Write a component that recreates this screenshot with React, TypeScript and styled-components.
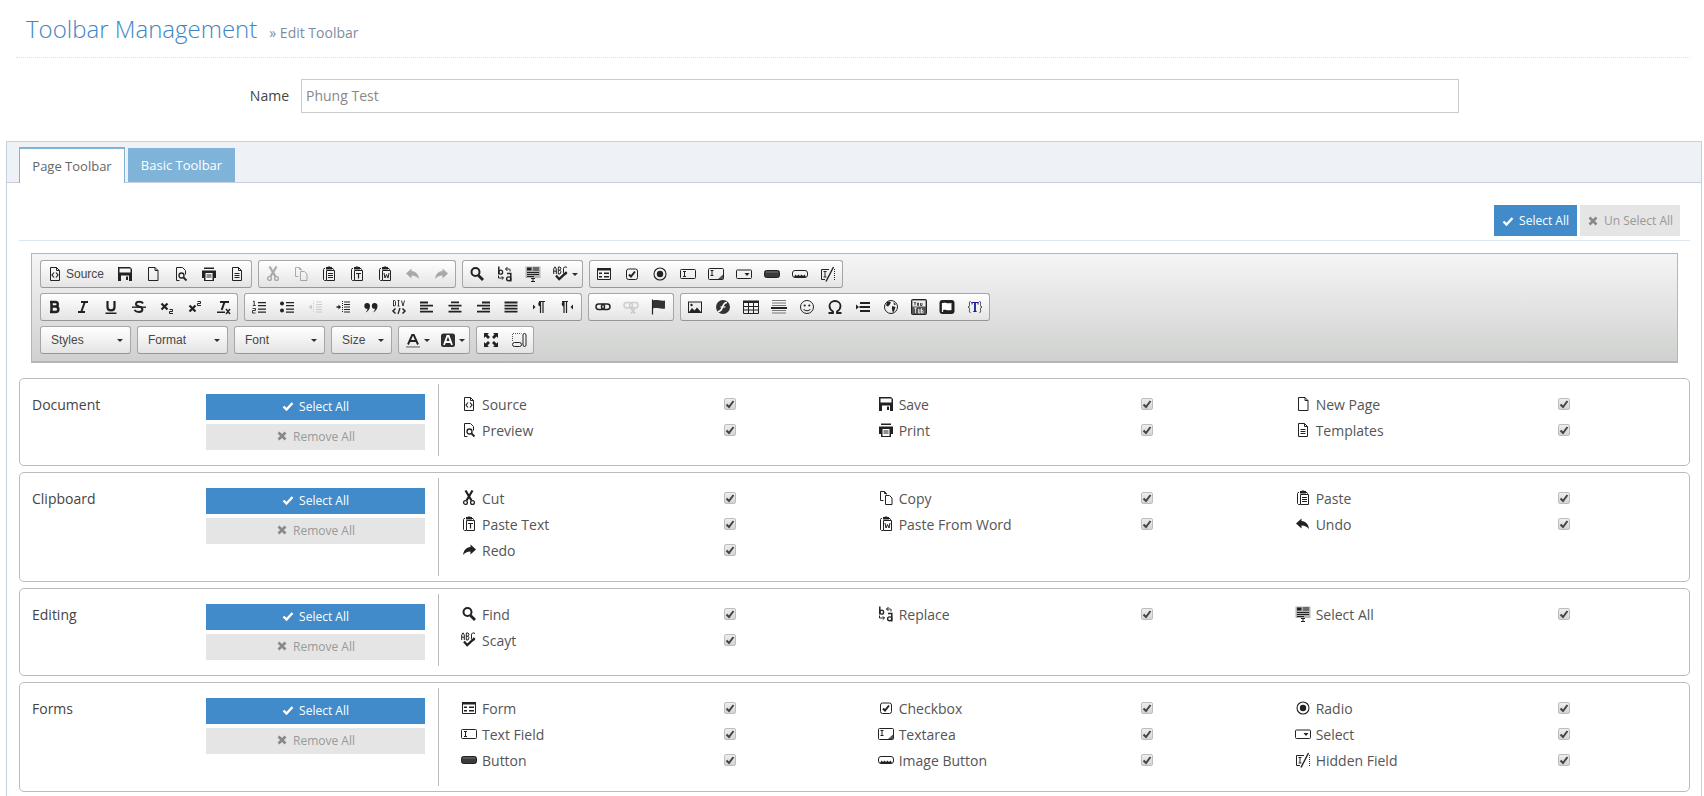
import React from "react";
import styled, { createGlobalStyle } from "styled-components";

const Global = createGlobalStyle`
  html, body { margin: 0; padding: 0; height: 796px; overflow: hidden; background: #fff; }
  body { font-family: "Open Sans", "Liberation Sans", sans-serif; font-size: 14px; color: #555; }
`;

const k = "#222";
const St = (p: { d: string; w?: number; c?: string }) => (
  <path d={p.d} fill="none" stroke={p.c || k} strokeWidth={p.w || 1} />
);
const Fi = (p: { d: string; c?: string }) => <path d={p.d} fill={p.c || k} fillRule="evenodd" />;

const clip = (inner: React.ReactNode) => (
  <>
    <St d="M4 2.500H3L2.500 3.500V13.500L3.500 14.500H5" />
    <St d="M11 2.500h1l.5 1v1" />
    <Fi d="M5 1h1.500l.5-.5h2l.5.5H11v2.500H5z" />
    <St d="M5.500 4.500h8v10h-8z" />
    {inner}
  </>
);
const comma = "M4 4a2.800 2.800 0 0 1 3 3c0 3-2 5.500-4.500 6.500 1.200-1.200 1.800-2.300 2-3.700A2.900 2.900 0 0 1 4 4z";

const ICONS: Record<string, React.ReactNode> = {
  source: <><St d="M3.500 1.500h6l3 3v10h-9z" /><St d="M9.500 1.500v3h3" /><St d="M7 6.500 5 9l2 2.500M9 6.500 11 9 9 11.500" w={1.2} /></>,
  save: <Fi d="M1 1h12l2 2v12H1zM2.500 2.500v4h11v-4zM4 9.500V15h8V9.500zM9 10.500h2V14H9z" />,
  newpage: <><St d="M3.500 1.500h6.500l3 3v10h-9.500z" /><St d="M10 1.500v3h3" /></>,
  preview: <><St d="M3.500 14.500v-13h6l3 3v4" /><St d="M3.500 14.500h3" /><circle cx="8.500" cy="9.500" r="2.500" fill="none" stroke={k} strokeWidth="1.300" /><St d="M10.500 11.500l3 3" w={1.800} /></>,
  print: <><Fi d="M3 1.500h10V3H3z" /><Fi d="M1 4.500h14V12h-2v3H3v-3H1z" /><Fi d="M4.500 7h7v7h-7z" c="#fff" /><Fi d="M5.500 8.500h5v1h-5zM5.500 10.500h5v1h-5z" /></>,
  templates: <><St d="M3.500 1.500h6l3 3v10h-9z" /><St d="M9.500 1.500v3h3" /><St d="M5.500 7.500h5M5.500 9.500h5M5.500 11.500h5" /></>,
  cut: <><St d="M4.500 .5 10.500 10.500M11.500 .5 5.500 10.500" w={2.200} /><circle cx="4.500" cy="12.500" r="1.900" fill="none" stroke={k} strokeWidth="1.300" /><circle cx="11.500" cy="12.500" r="1.900" fill="none" stroke={k} strokeWidth="1.300" /></>,
  copy: <><St d="M5.500 10.500h-3v-9h4l2 2v1" /><St d="M6.500 1.500v2h2" /><St d="M7.500 5.500h4l2.500 2.500v6.500H7.500z" /></>,
  paste: clip(<St d="M7 7.500h5M7 9.500h5M7 11.500h5" />),
  pastetext: clip(<St d="M7 7.500h5M9.500 7.500v5" w={1.200} />),
  pasteword: clip(<St d="M7 7l1 5 1.500-3.500L11 12l1-5" />),
  undo: <Fi d="M6.500 2.500 1 7.500l5.500 5V9.500c3.500 0 5.500 1.300 7.500 3.500-.5-4.500-3-7.500-7.500-8z" />,
  redo: <Fi d="M9.500 2.500 15 7.500l-5.500 5V9.500C6 9.500 4 10.800 2 13c.5-4.500 3-7.500 7.500-8z" />,
  find: <><circle cx="6.500" cy="6" r="4" fill="none" stroke={k} strokeWidth="2" /><St d="M9.500 9.500 14 14" w={2.800} /></>,
  replace: <><St d="M1.800 .5v8" w={1.500} /><ellipse cx="3.700" cy="6.200" rx="1.900" ry="2" fill="none" stroke={k} strokeWidth="1.300" /><St d="M12.500 3H8.500M10.500 1 8.500 3l2 2M13 3v2.500" /><St d="M1.500 9.500v2.500h5M4.800 10.300 6.500 12l-1.700 1.700" /><St d="M10 7.500h3.800v8" w={1.500} /><ellipse cx="11.700" cy="12.800" rx="2.100" ry="1.900" fill="none" stroke={k} strokeWidth="1.400" /></>,
  scayt: <><St d="M.7 8V3L2 .8 3.300 3v5M.7 5.200h2.600" /><St d="M5.300 8V1h1.700l1 1.200-1 2H5.300m1.700 0 1 1.500L7 8H5.300" /><St d="M14 1.500 13 1h-1.500L10.500 2.200v4.600L11.500 8H13l1-.5" /><St d="M3 9.500l3.200 3.700 7.500-7" w={2.300} /></>,
  selectall: <><Fi d="M.5 .5h15V12H.5z" c="#b4b4b4" /><Fi d="M2 1.500h4.500v3H2zM8 1.500h6v1H8zM8 3.500h6v1H8zM2 6h12v1H2zM2 8h12v1H2zM2 10h7v1H2z" /><St d="M6 12.500h4M6 15.500h4M8 12.500v3" /></>,
  form: <><St d="M1.500 2.500h13v11h-13z" /><Fi d="M1 2h14v2.500H1z" /><Fi d="M3 6.500h3v1.500H3zM3 10h3v1.500H3zM8 6.500h5v1.500H8zM8 10h5v1.500H8z" /></>,
  checkbox: <><rect x="2.500" y="3" width="11" height="10.500" rx="2" fill="none" stroke={k} /><St d="M5 8.500l2 2 4-5" w={2} /></>,
  radio: <><circle cx="8" cy="8" r="6" fill="none" stroke={k} strokeWidth="1.100" /><circle cx="8" cy="8" r="3.200" fill={k} /></>,
  textfield: <><rect x=".5" y="3.500" width="15" height="9" rx="1" fill="none" stroke={k} /><St d="M3 5.500h3M3 10.500h3M4.500 5.500v5" /></>,
  textarea: <><rect x=".5" y="2.500" width="15" height="11" rx="1" fill="none" stroke={k} /><St d="M2.500 4.500h3M2.500 9.500h3M4 4.500v5" /><Fi d="M15 8.500V13h-5z" c="#555" /></>,
  select: <><rect x=".5" y="4" width="15" height="8.500" rx="1" fill="none" stroke={k} /><Fi d="M8.500 7h5L11 10z" /></>,
  button: <><rect x=".5" y="4.500" width="15" height="7" rx="2" fill="#3a3a3a" stroke={k} /><Fi d="M2 5.500h12v1H2z" c="#777" /></>,
  imagebutton: <><rect x=".5" y="4.500" width="15" height="7" rx="2.500" fill="none" stroke={k} /><Fi d="M2 11l1.500-2.500L5 10l1.500-1.500L8 10l1.500-1.500L11 10l1.500-1.500L14 11z" /></>,
  hiddenfield: <><St d="M9 3.500H1.500v10H5" /><St d="M3.500 5.500h3M3.500 11h3M5 5.500V11" /><St d="M13.500 1 6 15.500" w={1.400} /><path d="M14.500 3v11" stroke={k} strokeDasharray="1 1" /></>,
  bold: <St d="M4.500 3v10M3 3h5.500c3 0 3 4.500 0 4.500h-3.500m3.500 0c3.800 0 3.800 5.500 0 5.500H3" w={2.500} />,
  italic: <St d="M6 3h7M3 13h7M9.800 3 6.200 13" w={2} />,
  underline: <><St d="M4.500 2v6.300c0 4.200 7 4.200 7 0V2" w={2.200} /><Fi d="M2.500 13.500h11V15h-11z" /></>,
  strike: <><St d="M12 4.500c-1-2.300-7-2.800-7 .5 0 1.300 1 2 3 2.500 5 1 4 5.500 0 5.500-2 0-3.500-.5-4.500-2" w={2} /><Fi d="M1 7.500h14v1.400H1z" /></>,
  sub: <><St d="M2.500 4.500l6 6M8.500 4.500l-6 6" w={2.200} /><St d="M10.500 10.500h3v2h-3v2h3.500" /></>,
  sup: <><St d="M2.500 6.500l6 6M8.500 6.500l-6 6" w={2.200} /><St d="M10.500 2.500h3v2h-3v2h3.500" /></>,
  removeformat: <><St d="M5 3h9M9.500 3 6.700 11" w={2} /><Fi d="M2 12.500h8V14H2z" /><St d="M11 10l4 5M15 10l-4 5" w={1.500} /></>,
  numbered: <><St d="M2 2.500 3.200 2v4.500M1.800 6.500h3M1.500 9.500h3v2h-3v2.500h3" w={.9} /><Fi d="M7 3h8v1.300H7zM7 6h8v1.300H7zM7 9.500h8v1.300H7zM7 12.500h8v1.300H7z" /></>,
  bulleted: <><circle cx="3" cy="4.500" r="2" fill={k} /><circle cx="3" cy="11.500" r="2" fill={k} /><Fi d="M7 3h8v1.300H7zM7 6h8v1.300H7zM7 9.500h8v1.300H7zM7 12.500h8v1.300H7z" /></>,
  outdent: <><Fi d="M5 5.500 1.500 8 5 10.500z" c="#888" /><path d="M6.500 2v12" stroke="#999" strokeDasharray="1 1" /><Fi d="M9 2.500h6v1H9zM9 5h6v1H9zM9 7.500h6v1H9zM9 10h6v1H9zM9 12.500h6v1H9z" c="#888" /></>,
  indent: <><Fi d="M1.500 7.300h2V5.500L6 8 3.500 10.500V8.700h-2z" /><path d="M7.500 2v12" stroke={k} strokeDasharray="1 1" /><Fi d="M9 2.500h6v1H9zM9 5h6v1H9zM9 7.500h6v1H9zM9 10h6v1H9zM9 12.500h6v1H9z" /></>,
  quote: <><Fi d={comma} /><g transform="translate(7.500 0)"><Fi d={comma} /></g></>,
  div: <><St d="M2.500 1.500V7h1.200l.8-1V2.500l-.8-1zM7.500 1.500V7M6.500 1.500h2M6.500 7h2M10.500 1.500l1.500 5.500 1.500-5.500" w={.9} /><St d="M4.500 9.500 2 12l2.500 2.500M11.500 9.500 14 12l-2.500 2.500" w={1.500} /><St d="M9 9l-2 6" w={1.300} /></>,
  left: <Fi d="M1 2.500h8v2H1zM1 5.800h13v1.600H1zM1 8.800h8v1.600H1zM1 11.800h13v1.800H1z" />,
  center: <Fi d="M4 2.500h8v1.700H4zM1.500 5.800h13v1.600h-13zM4 8.800h8v1.600H4zM1.500 11.800h13v1.800h-13z" />,
  right: <Fi d="M7 2.500h8v2H7zM2 5.800h13v1.600H2zM7 8.800h8v1.600H7zM2 11.800h13v1.800H2z" />,
  justify: <Fi d="M1.500 2.500h13v2h-13zM1.500 5.800h13v1.600h-13zM1.500 8.800h13v1.600h-13zM1.500 11.800h13v1.800h-13z" />,
  ltr: <><Fi d="M2 5.500 4.500 8 2 10.500z" /><St d="M8 2.500h6M9.500 2.500v11.500M12 2.500v11.500" w={1.200} /><Fi d="M9.500 2.500C6.500 2.500 6.500 7.500 9.500 7.500z" /></>,
  rtl: <><St d="M3 2.500h6M5 2.500v11.500M7.500 2.500v11.500" w={1.200} /><Fi d="M5 2.500C2 2.500 2 7.500 5 7.500z" /><Fi d="M14 5.500 11.500 8 14 10.500z" /></>,
  link: <><rect x="1" y="5" width="8.500" height="5.500" rx="2.700" fill="none" stroke={k} strokeWidth="1.500" /><rect x="6.500" y="5" width="8.500" height="5.500" rx="2.700" fill="none" stroke={k} strokeWidth="1.500" /></>,
  unlink: <><rect x="1" y="3.500" width="8.500" height="5.500" rx="2.700" fill="none" stroke="#888" strokeWidth="1.500" /><rect x="6.500" y="3.500" width="8.500" height="5.500" rx="2.700" fill="none" stroke="#888" strokeWidth="1.500" /><St d="M8 9.500l4 5M12 9.500l-4 5" w={1.500} c="#888" /></>,
  anchor: <><St d="M1.500 .5v15" w={1.200} /><Fi d="M2 1.500c3-1.500 8 1 12 0v8c-4 1-9-1.500-12 0z" c="#333" /></>,
  image: <><Fi d="M1 2.500h14V14H1z" /><Fi d="M2 3.500h12V13H2z" c="#eee" /><Fi d="M2 13l3-4 2.500 2.500L10 8.500l4 4.500z" /><circle cx="4.500" cy="6" r="1.200" fill={k} /></>,
  flash: <><circle cx="8" cy="8" r="7" fill="#333" /><St d="M12 3.500c-3 0-3.500 2-4.500 4.500s-1.500 4.500-4.500 4.500" w={1.600} c="#fff" /><St d="M5.500 8h5" w={1.200} c="#fff" /></>,
  table: <><Fi d="M0 1.500h16V4H0z" /><St d="M.5 4v10.500h15V4M.5 7.500h15M.5 11h15M5.500 4v10.500M10.500 4v10.500" /></>,
  hr: <><Fi d="M1 1h14v1H1zM1 3.500h14v1H1zM1 6h14v1H1zM1 11h14v1H1zM1 13.500h14v1H1z" c="#777" /><Fi d="M0 8h16v2H0z" /></>,
  smiley: <><circle cx="8" cy="8" r="6.500" fill="none" stroke={k} /><circle cx="5.700" cy="6.500" r="1.100" fill={k} /><circle cx="10.300" cy="6.500" r="1.100" fill={k} /><St d="M4.500 10c1.500 2.300 5.500 2.300 7 0" /></>,
  omega: <St d="M1.500 14h4.500v-1.500C3.500 11 2.500 9 2.500 7c0-3 2.500-5 5.500-5s5.500 2 5.500 5c0 2-1 4-3.500 5.500V14h4.500" w={1.800} />,
  pagebreak: <><Fi d="M1 5.500 4 8l-3 2.500z" /><Fi d="M5 3h10v2H5zM4.500 7h10.500v2H4.500zM5 11h10v2H5z" /></>,
  iframe: <><circle cx="8" cy="8" r="6.500" fill="none" stroke={k} /><Fi d="M4 3c2-1 3 0 4 .5L6.500 6 5 7.500 3 6.500zM9 7l3.500 1-1 3L10 14 9 10.500zM10.500 3l2.500 2.500-2 .5z" /></>,
  youtube: <><rect x=".5" y=".5" width="15" height="15" rx="1" fill="#555" stroke={k} /><Fi d="M1.500 1.500h13V7.500h-13z" c="#eee" /><St d="M3 3l1 1.500L5 3M4 4.500V6.500M6.500 4h1v2.500h-1zM9.500 4v2.500h1.500V4" w={.8} /><St d="M3 9h3M4.500 9v5M7.500 10v4h1.500v-4M10.500 9v5h1.500v-2.500h-1.500" w={.8} c="#eee" /></>,
  video: <><rect x=".5" y="1" width="15" height="14" rx="3" fill={k} /><St d="M3.500 4v9" c="#fff" w={1.200} /><Fi d="M4 4c2-1 4 1 8.500 0v7c-4.500 1-6.500-1-8.500 0z" c="#fff" /></>,
  placeholder: <><St d="M3.500 2.500c-1.500 0-1 1.500-1 3s0 2-1.500 2.500c1.500.5 1.500 1 1.500 2.500s-.5 3 1 3M12.500 2.500c1.500 0 1 1.500 1 3s0 2 1.500 2.500c-1.500.5-1.500 1-1.500 2.500s.5 3-1 3" c="#333" /><St d="M4.500 3.500h7M5 3v2.500M11 3v2.500M6.300 12.500h3.400" c="#1b1b9a" /><St d="M8 3.500v9" w={1.800} c="#1b1b9a" /></>,
  textcolor: <><St d="M3 12.500 7.200 3h1.600L13 12.500M5 9h6" w={1.900} /><Fi d="M1 14h14v1.800H1z" c="#999" /></>,
  bgcolor: <><rect x="1" y="1.500" width="14" height="13.500" rx="2.500" fill="#2e2e2e" /><St d="M4 13 7.300 4h1.400L12 13M5.500 10h5" w={1.800} c="#fff" /></>,
  maximize: <><Fi d="M1 1h5L4.500 2.500 7 5 5 7 2.500 4.500 1 6z" /><Fi d="M15 1h-5l1.500 1.500L9 5l2 2 2.500-2.500L15 6z" /><Fi d="M1 15h5l-1.500-1.500L7 11 5 9l-2.500 2.500L1 10z" /><Fi d="M15 15h-5l1.500-1.500L9 11l2-2 2.500 2.500L15 10z" /></>,
  showblocks: <><path d="M1.500 9V1.500h9" fill="none" stroke="#555" strokeDasharray="1 1" /><rect x="12" y="1.500" width="3" height="13" rx="1.500" fill="none" stroke={k} /><rect x="1.500" y="10.500" width="9" height="4" rx="2" fill="none" stroke={k} /></>,
};

const IconSvg = styled.svg<{ $faded?: boolean }>`
  display: block;
  width: 16px;
  height: 16px;
  flex: none;
  opacity: ${(p) => (p.$faded ? 0.35 : 1)};
`;
const Icon = ({ name, faded }: { name: string; faded?: boolean }) => (
  <IconSvg viewBox="0 0 16 16" $faded={faded}>{ICONS[name]}</IconSvg>
);

const Page = styled.div`
  height: 796px;
  overflow: hidden;
`;
const Header = styled.header`
  display: flex;
  align-items: baseline;
  gap: 12px;
  height: 57px;
  margin: 0 14px 0 16px;
  padding-left: 10px;
  border-bottom: 1px dotted #ddd;
`;
const Title = styled.h1`
  margin: 0;
  padding-top: 11px;
  font-size: 24px;
  line-height: 36px;
  font-weight: 300;
  color: #3f85c3;
`;
const Subtitle = styled.small`
  font-size: 14px;
  color: #7d8da1;
`;
const NameRow = styled.div`
  display: flex;
  align-items: center;
  justify-content: flex-end;
  gap: 12px;
  width: 1459px;
  margin-top: 21px;
`;
const NameLabel = styled.label`
  font-size: 14px;
  color: #444;
  margin-top: -2px;
`;
const NameInput = styled.input`
  box-sizing: border-box;
  width: 1158px;
  height: 34px;
  padding: 0 4px 2px;
  border: 1px solid #ccc;
  font: 14px "Open Sans", sans-serif;
  color: #888;
  outline: none;
`;
const Panel = styled.section`
  margin: 28px 2px 0 6px;
  border: 1px solid #c5d0dc;
  height: 800px;
`;
const TabBar = styled.nav`
  display: flex;
  align-items: flex-end;
  gap: 3px;
  height: 40px;
  padding-left: 12px;
  background: #eef1f6;
  border-bottom: 1px solid #c5d0dc;
`;
const Tab = styled.div<{ $active?: boolean; $w: number }>`
  box-sizing: border-box;
  width: ${(p) => p.$w}px;
  height: ${(p) => (p.$active ? 36 : 34)}px;
  margin-bottom: ${(p) => (p.$active ? -1 : 0)}px;
  display: flex;
  align-items: center;
  justify-content: center;
  font-size: 13px;
  color: ${(p) => (p.$active ? "#666" : "#fff")};
  background: ${(p) => (p.$active ? "#fff" : "#7fb3d8")};
  border: ${(p) => (p.$active ? "1px solid #7fb3d8" : "none")};
  border-top-width: ${(p) => (p.$active ? 2 : 0)}px;
  border-bottom: none;
`;
const Content = styled.div`
  padding: 22px 11px 0 12px;
`;
const Actions = styled.div`
  display: flex;
  justify-content: flex-end;
  gap: 3px;
  padding: 0 10px 4px 0;
  border-bottom: 1px solid #dce8f1;
`;
const Button = styled.div<{ $primary?: boolean; $w?: number; $h: number; $lift?: boolean }>`
  box-sizing: border-box;
  display: flex;
  align-items: center;
  justify-content: center;
  gap: 5px;
  width: ${(p) => (p.$w ? `${p.$w}px` : "auto")};
  height: ${(p) => p.$h}px;
  padding-bottom: ${(p) => (p.$lift ? 2 : 0)}px;
  font-size: 12px;
  background: ${(p) => (p.$primary ? "#428bca" : "#e5e5e5")};
  color: ${(p) => (p.$primary ? "#fff" : "#999")};
`;
const Editor = styled.div`
  box-sizing: border-box;
  height: 110px;
  margin: 12px 12px 0 12px;
  padding: 6px 8px;
  display: flex;
  flex-direction: column;
  gap: 5px;
  border: 1px solid #b6b6b6;
  border-bottom-width: 2px;
  background: linear-gradient(#f5f5f5, #cfd1cf);
  font-family: "Liberation Sans", Arial, sans-serif;
  font-size: 12px;
  color: #474747;
`;
const ToolRow = styled.div`
  display: flex;
  gap: 6px;
  height: 28px;
`;
const ToolGroup = styled.div`
  display: flex;
  box-sizing: border-box;
  height: 28px;
  border: 1px solid #a6a6a6;
  border-bottom-color: #979797;
  border-radius: 3px;
  background: linear-gradient(#fff, #e4e4e4);
`;
const ToolBtn = styled.div<{ $w?: number }>`
  box-sizing: border-box;
  width: ${(p) => p.$w || 28}px;
  height: 26px;
  display: flex;
  align-items: center;
  padding-left: 6px;
  gap: 3px;
`;
const Caret = styled.i`
  display: block;
  width: 0;
  height: 0;
  border: 3px solid transparent;
  border-top: 3px solid #2f2f2f;
  border-bottom: none;
`;
const Combo = styled.div<{ $w: number }>`
  box-sizing: border-box;
  width: ${(p) => p.$w}px;
  height: 28px;
  padding: 0 7px 0 10px;
  display: flex;
  align-items: center;
  justify-content: space-between;
  border: 1px solid #a6a6a6;
  border-bottom-color: #979797;
  border-radius: 3px;
  background: linear-gradient(#fff, #e4e4e4);
`;
const Cards = styled.div`
  display: flex;
  flex-direction: column;
  gap: 6px;
  margin-top: 15px;
`;
const Card = styled.article`
  box-sizing: border-box;
  display: flex;
  align-items: flex-start;
  min-height: 88px;
  padding: 5px 0 5px 12px;
  border: 1px solid #bbb;
  border-radius: 5px;
`;
const CardLabel = styled.div`
  flex: none;
  width: 174px;
  padding-top: 10px;
  font-size: 14px;
  line-height: 22px;
  color: #444;
`;
const CardButtons = styled.div`
  flex: none;
  display: flex;
  flex-direction: column;
  gap: 4px;
  width: 219px;
  margin: 10px 13px 0 0;
`;
const Rows = styled.div`
  flex: 1;
  min-width: 0;
  box-sizing: border-box;
  min-height: 72px;
  padding: 8px 0 12px 22px;
  border-left: 1px solid #bbb;
  display: grid;
  grid-template-columns: 416.67px 417px 1fr;
  grid-auto-rows: 26px;
  align-content: start;
`;
const Item = styled.div`
  display: grid;
  grid-template-columns: 21px 242px 13px;
  align-items: center;
  font-size: 14px;
  color: #555;
`;
const ItemIcon = styled.span`
  display: block;
  margin-top: -2px;
`;
const ItemText = styled.span`
  margin-bottom: 2px;
`;
const Check = styled.span`
  box-sizing: border-box;
  display: flex;
  align-items: center;
  justify-content: center;
  width: 12px;
  height: 12px;
  margin-top: -2px;
  border: 1px solid #bdbdbd;
  border-radius: 2px;
  background: linear-gradient(#eee, #d4d4d4);
`;
const CheckMark = styled.svg`
  display: block;
  width: 10px;
  height: 10px;
`;
const Glyph = styled.svg`
  display: block;
  width: 12px;
  height: 12px;
`;

const CheckG = () => (
  <Glyph viewBox="0 0 12 12"><path d="M1.500 6.500 4.500 9.500 10.500 3" fill="none" stroke="currentColor" strokeWidth="2.400" /></Glyph>
);
const CrossG = () => (
  <Glyph viewBox="0 0 12 12"><path d="M2.500 2.500l7 7M9.500 2.500l-7 7" fill="none" stroke="#888" strokeWidth="2.600" /></Glyph>
);

type Tool = { i: string; faded?: boolean; caret?: boolean; label?: string };
const t = (s: string): Tool[] => s.split(" ").map((i) => (i.startsWith("~") ? { i: i.slice(1), faded: true } : { i }));

const ROW1: Tool[][] = [
  [{ i: "source", label: "Source" }, ...t("save newpage preview print templates")],
  t("~cut ~copy paste pastetext pasteword ~undo ~redo"),
  [...t("find replace selectall"), { i: "scayt", caret: true }],
  t("form checkbox radio textfield textarea select button imagebutton hiddenfield"),
];
const ROW2: Tool[][] = [
  t("bold italic underline strike sub sup removeformat"),
  t("numbered bulleted ~outdent indent quote div left center right justify ltr rtl"),
  t("link ~unlink anchor"),
  t("image flash table hr smiley omega pagebreak iframe youtube video placeholder"),
];
const ROW3: Tool[][] = [
  [{ i: "textcolor", caret: true }, { i: "bgcolor", caret: true }],
  t("maximize showblocks"),
];

const Tools = ({ groups }: { groups: Tool[][] }) => (
  <>
    {groups.map((g, n) => (
      <ToolGroup key={n}>
        {g.map((b) => (
          <ToolBtn key={b.i} $w={b.label ? 70 : b.caret ? 35 : 28}>
            <Icon name={b.i} faded={b.faded} />
            {b.label}
            {b.caret && <Caret />}
          </ToolBtn>
        ))}
      </ToolGroup>
    ))}
  </>
);

const CARDS: { name: string; items: [string, string][] }[] = [
  { name: "Document", items: [["source", "Source"], ["save", "Save"], ["newpage", "New Page"], ["preview", "Preview"], ["print", "Print"], ["templates", "Templates"]] },
  { name: "Clipboard", items: [["cut", "Cut"], ["copy", "Copy"], ["paste", "Paste"], ["pastetext", "Paste Text"], ["pasteword", "Paste From Word"], ["undo", "Undo"], ["redo", "Redo"]] },
  { name: "Editing", items: [["find", "Find"], ["replace", "Replace"], ["selectall", "Select All"], ["scayt", "Scayt"]] },
  { name: "Forms", items: [["form", "Form"], ["checkbox", "Checkbox"], ["radio", "Radio"], ["textfield", "Text Field"], ["textarea", "Textarea"], ["select", "Select"], ["button", "Button"], ["imagebutton", "Image Button"], ["hiddenfield", "Hidden Field"]] },
];

export default function App() {
  return (
    <Page>
      <Global />
      <Header>
        <Title>Toolbar Management</Title>
        <Subtitle>» Edit Toolbar</Subtitle>
      </Header>
      <NameRow>
        <NameLabel>Name</NameLabel>
        <NameInput defaultValue="Phung Test" />
      </NameRow>
      <Panel>
        <TabBar>
          <Tab $active $w={106}>Page Toolbar</Tab>
          <Tab $w={107}>Basic Toolbar</Tab>
        </TabBar>
        <Content>
          <Actions>
            <Button $primary $w={83} $h={31}><CheckG />Select All</Button>
            <Button $w={100} $h={31}><CrossG />Un Select All</Button>
          </Actions>
          <Editor>
            <ToolRow><Tools groups={ROW1} /></ToolRow>
            <ToolRow><Tools groups={ROW2} /></ToolRow>
            <ToolRow>
              <Combo $w={91}>Styles<Caret /></Combo>
              <Combo $w={91}>Format<Caret /></Combo>
              <Combo $w={91}>Font<Caret /></Combo>
              <Combo $w={61}>Size<Caret /></Combo>
              <Tools groups={ROW3} />
            </ToolRow>
          </Editor>
          <Cards>
            {CARDS.map((c) => (
              <Card key={c.name}>
                <CardLabel>{c.name}</CardLabel>
                <CardButtons>
                  <Button $primary $h={26} $lift><CheckG />Select All</Button>
                  <Button $h={26} $lift><CrossG />Remove All</Button>
                </CardButtons>
                <Rows>
                  {c.items.map(([i, label]) => (
                    <Item key={i}>
                      <ItemIcon><Icon name={i} /></ItemIcon>
                      <ItemText>{label}</ItemText>
                      <Check><CheckMark viewBox="0 0 10 10"><path d="M1.500 5.500 4 8 8.500 2" fill="none" stroke="#444" strokeWidth="2" /></CheckMark></Check>
                    </Item>
                  ))}
                </Rows>
              </Card>
            ))}
          </Cards>
        </Content>
      </Panel>
    </Page>
  );
}
